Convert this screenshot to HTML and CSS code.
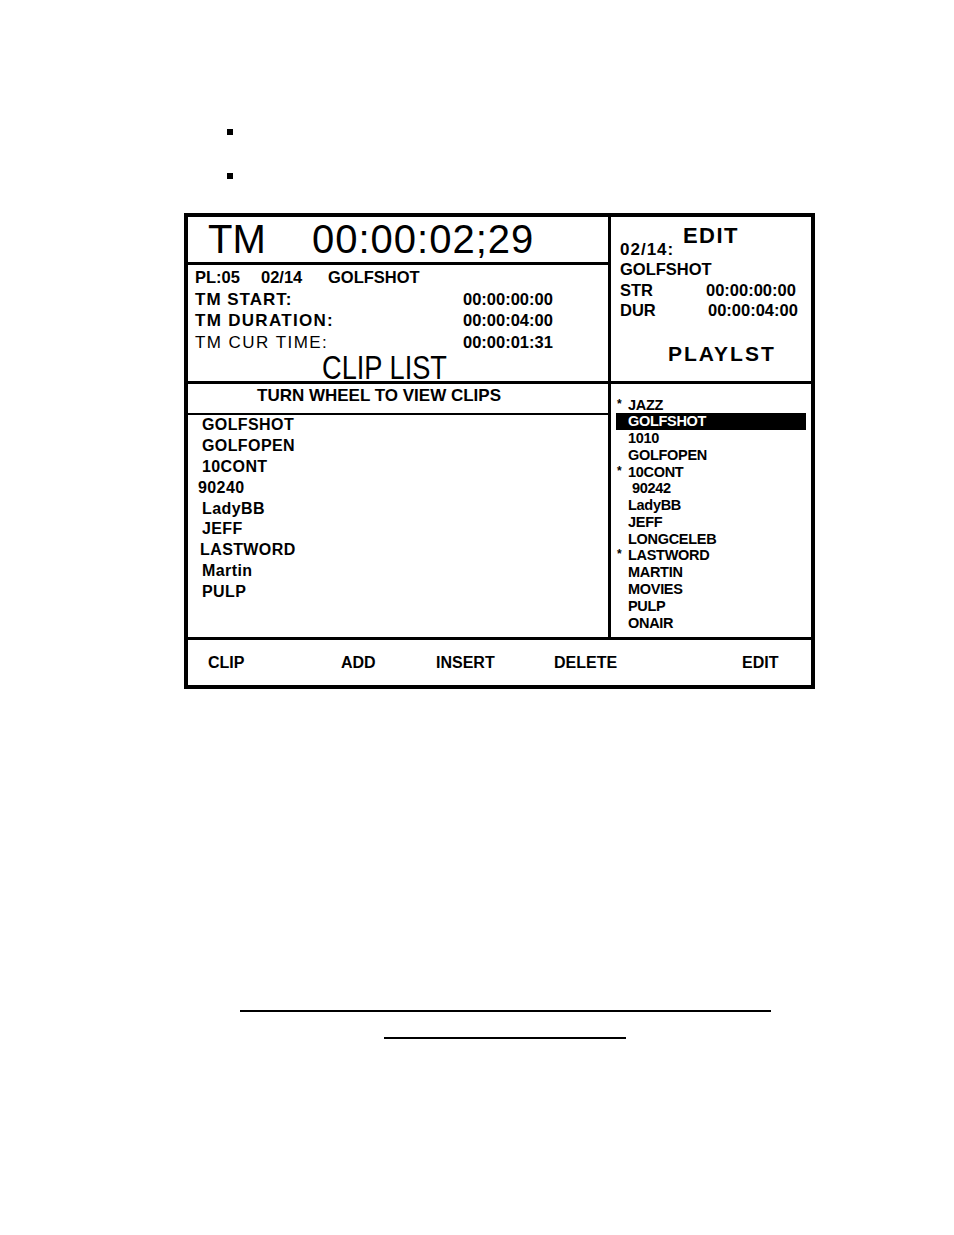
FILE: index.html
```html
<!DOCTYPE html>
<html>
<head>
<meta charset="utf-8">
<title>Clip List</title>
<link rel="stylesheet" href="styles.css">
</head>
<body>
<div class="page">
  <ul class="bullets"><li></li><li></li></ul>
  <div class="panel">
    <div class="row top">
      <div class="col-left">
        <div class="tm-head"><span class="tm-label">TM</span><span class="tm-time">00:00:02;29</span></div>
        <div class="info">
          <div class="info-row"><span class="pl">PL:05</span><span class="dt">02/14</span><span class="nm">GOLFSHOT</span></div>
          <div class="info-row"><span class="lbl start">TM START:</span><span class="val">00:00:00:00</span></div>
          <div class="info-row"><span class="lbl dur">TM DURATION:</span><span class="val">00:00:04:00</span></div>
          <div class="info-row"><span class="lbl cur">TM CUR TIME:</span><span class="val">00:00:01:31</span></div>
          <div class="clip-title"><span>CLIP LIST</span></div>
        </div>
      </div>
      <div class="col-right edit">
        <div class="edit-title">EDIT</div>
        <div class="edit-date">02/14:</div>
        <div class="edit-row">GOLFSHOT</div>
        <div class="edit-row"><span class="e-lbl">STR</span><span class="val">00:00:00:00</span></div>
        <div class="edit-row"><span class="e-lbl">DUR</span><span class="val shift">00:00:04:00</span></div>
        <div class="playlst">PLAYLST</div>
      </div>
    </div>
    <div class="row mid">
      <div class="col-left">
        <div class="clips-head">TURN WHEEL TO VIEW CLIPS</div>
        <ul class="clips">
          <li>GOLFSHOT</li>
          <li>GOLFOPEN</li>
          <li>10CONT</li>
          <li class="l4">90240</li>
          <li>LadyBB</li>
          <li>JEFF</li>
          <li class="l2">LASTWORD</li>
          <li>Martin</li>
          <li>PULP</li>
        </ul>
      </div>
      <div class="col-right">
        <ul class="playlist">
          <li><span class="star">*</span>JAZZ</li>
          <li class="sel"><span class="star"></span>GOLFSHOT</li>
          <li><span class="star"></span>1010</li>
          <li><span class="star"></span>GOLFOPEN</li>
          <li><span class="star">*</span>10CONT</li>
          <li><span class="star"></span><span class="r4">90242</span></li>
          <li><span class="star"></span>LadyBB</li>
          <li><span class="star"></span>JEFF</li>
          <li><span class="star"></span>LONGCELEB</li>
          <li><span class="star">*</span>LASTWORD</li>
          <li><span class="star"></span>MARTIN</li>
          <li><span class="star"></span>MOVIES</li>
          <li><span class="star"></span>PULP</li>
          <li><span class="star"></span>ONAIR</li>
        </ul>
      </div>
    </div>
    <div class="bar">
      <span class="k1">CLIP</span><span class="k2">ADD</span><span class="k3">INSERT</span><span class="k4">DELETE</span><span>EDIT</span>
    </div>
  </div>
  <div class="rule long"></div>
  <div class="rule short"></div>
</div>
</body>
</html>
```

FILE: styles.css
```css
html, body {
  margin: 0;
  padding: 0;
  background: #fff;
  color: #000;
}
body {
  font-family: "Liberation Sans", Arial, sans-serif;
}
.page {
  width: 954px;
  height: 1235px;
  overflow: hidden;
}
.bullets {
  list-style: none;
  margin: 0;
  padding: 129px 0 0 227px;
}
.bullets li {
  width: 6px;
  height: 6px;
  background: #000;
  margin-bottom: 38px;
}
.bullets li:last-child { margin-bottom: 0; }

.panel {
  margin: 34px 0 0 184px;
  width: 631px;
  height: 476px;
  box-sizing: border-box;
  border: 4px solid #000;
  display: flex;
  flex-direction: column;
}
.row {
  display: flex;
  border-bottom: 3px solid #000;
}
.row.top { height: 164px; }
.row.mid { height: 253px; }
.col-left {
  width: 420px;
  border-right: 3px solid #000;
  display: flex;
  flex-direction: column;
}
.col-right {
  flex: 1;
}

/* TM header */
.tm-head {
  height: 45px;
  border-bottom: 3px solid #000;
  font-size: 40px;
  line-height: 45px;
  padding-left: 20px;
  letter-spacing: 1px;
  white-space: nowrap;
}
.tm-label {
  display: inline-block;
  width: 104px;
  letter-spacing: 0;
}

/* info block */
.info {
  padding: 2px 0 0 7px;
  flex: 1;
}
.info-row {
  height: 21.7px;
  line-height: 21.7px;
  font-size: 16.5px;
  font-weight: bold;
  white-space: nowrap;
}
.pl { display: inline-block; width: 66px; }
.dt { display: inline-block; width: 67px; }
.lbl {
  display: inline-block;
  width: 268px;
  font-size: 17px;
}
.lbl.start { letter-spacing: 1px; }
.lbl.dur { letter-spacing: 1.3px; }
.lbl.cur { font-weight: normal; letter-spacing: 1.45px; }
.val {
  font-size: 16.5px;
  font-weight: bold;
}
.clip-title {
  height: 26px;
  line-height: 26px;
  font-size: 34px;
  padding-left: 127px;
  white-space: nowrap;
}
.clip-title span {
  display: inline-block;
  transform: scaleX(0.8);
  transform-origin: left center;
}

/* edit block */
.edit {
  padding: 12px 0 0 9px;
  box-sizing: border-box;
}
.edit-title {
  font-size: 22px;
  font-weight: bold;
  line-height: 13px;
  height: 13px;
  text-align: center;
  letter-spacing: 1.5px;
  padding-right: 9px;
}
.edit-date {
  font-size: 17px;
  font-weight: bold;
  line-height: 18px;
  height: 18px;
  margin-top: -1px;
  letter-spacing: 1px;
}
.edit-row {
  font-size: 16.5px;
  font-weight: bold;
  line-height: 20.5px;
  height: 20.5px;
  white-space: nowrap;
}
.e-lbl {
  display: inline-block;
  width: 86px;
}
.val.shift { padding-left: 2px; }
.playlst {
  margin-top: 23px;
  padding-left: 48px;
  font-size: 21px;
  font-weight: bold;
  line-height: 20px;
  letter-spacing: 2px;
}

/* clip list */
.clips-head {
  height: 29px;
  border-bottom: 2px solid #000;
  font-size: 17px;
  font-weight: bold;
  line-height: 24px;
  padding-left: 69px;
  white-space: nowrap;
}
.clips {
  list-style: none;
  margin: 0;
  padding: 0 0 0 14px;
}
.clips li {
  font-size: 16px;
  font-weight: bold;
  line-height: 20.9px;
  height: 20.9px;
  letter-spacing: 0.4px;
}
.clips li.l4 { margin-left: -4px; }
.clips li.l2 { margin-left: -2px; }

/* playlist */
.playlist {
  list-style: none;
  margin: 0;
  padding: 12.6px 0 0 0;
}
.playlist li {
  font-size: 14.5px;
  font-weight: bold;
  line-height: 16.77px;
  height: 16.77px;
  padding-left: 6px;
  letter-spacing: -0.3px;
  white-space: nowrap;
}
.playlist li.sel {
  background: #000;
  color: #fff;
  margin-left: 5px;
  width: 190px;
  padding-left: 1px;
  box-sizing: border-box;
}
.star {
  display: inline-block;
  width: 11px;
  font-size: 12px;
  vertical-align: top;
  line-height: 14px;
}
.r4 { padding-left: 4px; }

/* bottom bar */
.bar {
  flex: 1;
  font-size: 16px;
  font-weight: bold;
  line-height: 45px;
  padding-left: 20px;
  white-space: nowrap;
}
.bar span { display: inline-block; }
.k1 { width: 133px; }
.k2 { width: 95px; }
.k3 { width: 118px; }
.k4 { width: 188px; }

/* rules */
.rule {
  height: 2px;
  background: #000;
}
.rule.long {
  margin: 321px 0 0 240px;
  width: 531px;
}
.rule.short {
  margin: 25px 0 0 384px;
  width: 242px;
}
```
